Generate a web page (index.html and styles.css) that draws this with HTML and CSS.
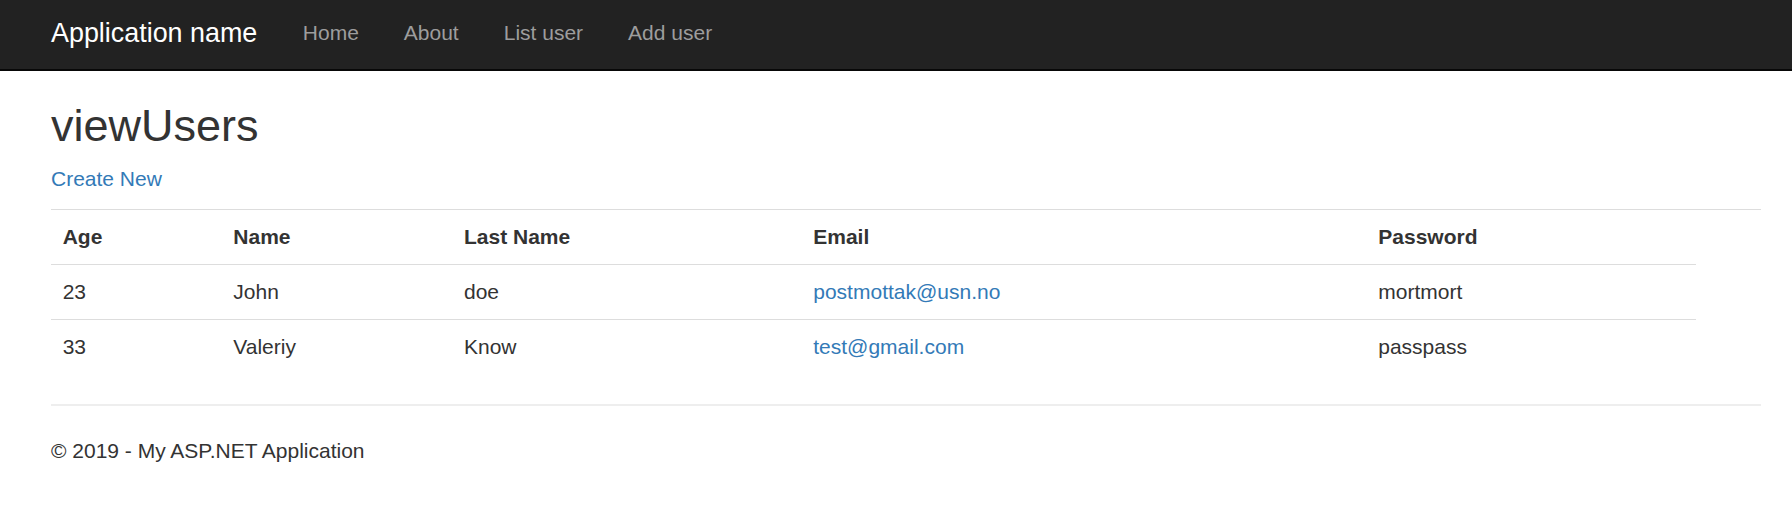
FILE: index.html
```html
<!DOCTYPE html>
<html lang="en">
<head>
<meta charset="utf-8">
<title>viewUsers - My ASP.NET Application</title>
<link rel="stylesheet" href="styles.css">
</head>
<body>
<header class="navbar">
  <div class="navbar-inner">
    <a class="brand" href="#">Application name</a>
    <nav class="nav">
      <a href="#">Home</a>
      <a href="#">About</a>
      <a href="#">List user</a>
      <a href="#">Add user</a>
    </nav>
  </div>
</header>
<main class="body-content">
  <h2 class="title">viewUsers</h2>
  <p class="actions"><a href="#">Create New</a></p>
  <table class="table">
    <colgroup>
      <col class="c-age">
      <col class="c-name">
      <col class="c-last">
      <col class="c-email">
      <col class="c-pass">
      <col class="c-empty">
    </colgroup>
    <tbody>
      <tr>
        <th>Age</th>
        <th>Name</th>
        <th>Last Name</th>
        <th>Email</th>
        <th>Password</th>
        <th></th>
      </tr>
      <tr>
        <td>23</td>
        <td>John</td>
        <td>doe</td>
        <td><a href="#">postmottak@usn.no</a></td>
        <td>mortmort</td>
      </tr>
      <tr>
        <td>33</td>
        <td>Valeriy</td>
        <td>Know</td>
        <td><a href="#">test@gmail.com</a></td>
        <td>passpass</td>
      </tr>
    </tbody>
  </table>
  <hr class="rule">
  <footer class="footer">
    <p>&copy; 2019 - My ASP.NET Application</p>
  </footer>
</main>
</body>
</html>
```

FILE: styles.css
```css
* { box-sizing: border-box; }

html, body {
  margin: 0;
  padding: 0;
  background: #fff;
}

body {
  font-family: "Liberation Sans", Arial, Helvetica, sans-serif;
  font-size: 21px;
  line-height: 29.3px;
  color: #333;
}

a {
  color: #337ab7;
  text-decoration: none;
}

.navbar {
  background: #222;
  border-bottom: 2px solid #080808;
  height: 71px;
}

.navbar-inner {
  display: flex;
  align-items: flex-start;
  height: 69px;
  padding-left: 51px;
}

.brand {
  color: #fff;
  font-size: 26.9px;
  line-height: 66px;
  margin-right: 45.5px;
}

.nav {
  display: flex;
  gap: 45px;
}

.nav a {
  color: #9d9d9d;
  font-size: 21px;
  line-height: 66px;
}

.body-content {
  padding: 0 31px 0 51px;
}

.title {
  font-size: 45px;
  font-weight: 500;
  line-height: 47.85px;
  margin: 30.5px 0 14.4px;
  color: #333;
}

.actions {
  margin: 0 0 16.4px;
}

.table {
  width: 100%;
  border-collapse: collapse;
  border-spacing: 0;
  table-layout: fixed;
  margin-bottom: 29.4px;
}

.c-age { width: 170.6px; }
.c-name { width: 230.7px; }
.c-last { width: 349.3px; }
.c-email { width: 565px; }
.c-pass { width: 329.4px; }
.c-empty { width: 65px; }

.table th,
.table td {
  text-align: left;
  vertical-align: top;
  padding: 11.5px 11.7px 13.2px;
  border-top: 1px solid #ddd;
  line-height: 29.3px;
}

.table th {
  font-weight: bold;
}

.rule {
  border: 0;
  border-top: 2px solid #eee;
  height: 0;
  margin: 29.4px 0 30.6px;
}

.footer p {
  margin: 0 0 14px;
}
```
